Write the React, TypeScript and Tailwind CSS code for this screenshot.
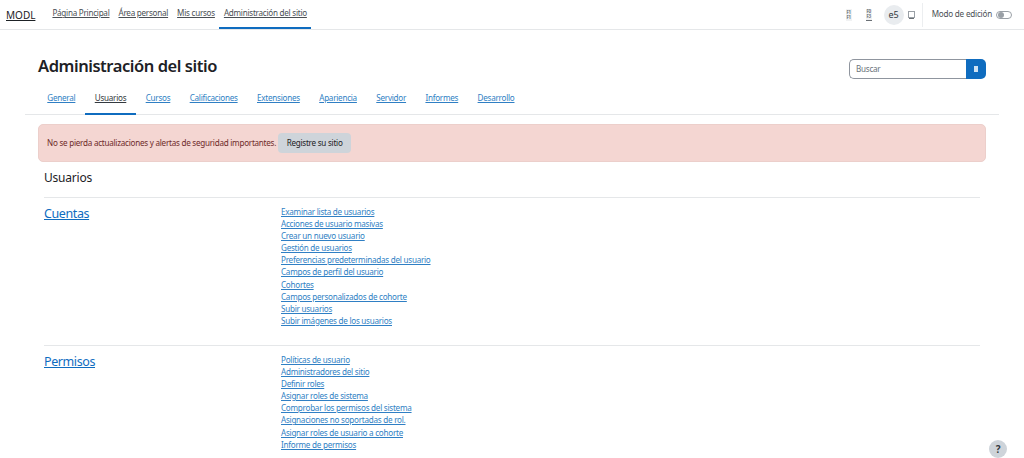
import { ReactNode } from "react"

const primaryNav = ["Página Principal", "Área personal", "Mis cursos", "Administración del sitio"]
const tabs = ["General", "Usuarios", "Cursos", "Calificaciones", "Extensiones", "Apariencia", "Servidor", "Informes", "Desarrollo"]

const sections = [
  {
    title: "Cuentas",
    links: [
      "Examinar lista de usuarios",
      "Acciones de usuario masivas",
      "Crear un nuevo usuario",
      "Gestión de usuarios",
      "Preferencias predeterminadas del usuario",
      "Campos de perfil del usuario",
      "Cohortes",
      "Campos personalizados de cohorte",
      "Subir usuarios",
      "Subir imágenes de los usuarios",
    ],
  },
  {
    title: "Permisos",
    links: [
      "Políticas de usuario",
      "Administradores del sitio",
      "Definir roles",
      "Asignar roles de sistema",
      "Comprobar los permisos del sistema",
      "Asignaciones no soportadas de rol.",
      "Asignar roles de usuario a cohorte",
      "Informe de permisos",
    ],
  },
]

function MissingGlyph({ underline, children }: { underline?: boolean; children: ReactNode }) {
  return (
    <span className={`flex h-[12px] w-[6px] flex-col items-center justify-center bg-[#f1f2f3] text-[4.5px] leading-[5px] font-semibold text-[#5c6267] ${underline ? "border-b border-[#6a7075]" : ""}`}>
      {children}
    </span>
  )
}

export default function App() {
  return (
    <div className="relative h-[458px] overflow-hidden bg-white font-['Noto_Sans',sans-serif] text-[8.1px] tracking-[-0.25px] text-[#1d2125]">
      <nav className="flex h-[30px] items-stretch border-b border-[#e5e7e9] pr-[12px] pl-[6px]">
        <a className="mr-[12.5px] self-center text-[10px] leading-none tracking-normal text-[#1d2125] underline">MODL</a>
        <ul className="flex items-stretch">
          {primaryNav.map((item, index) => (
            <li
              key={item}
              className={`flex items-center px-[4.5px] text-[#4a4f54] underline ${index === 3 ? "border-b-2 border-[#0f6cbf]" : "border-b-2 border-transparent"}`}
            >
              {item}
            </li>
          ))}
        </ul>
        <div className="ml-auto flex items-center">
          <MissingGlyph>
            <span>F1</span>
            <span>F1</span>
          </MissingGlyph>
          <span className="ml-[14px]">
            <MissingGlyph underline>
              <span>F0</span>
              <span>F3</span>
            </MissingGlyph>
          </span>
          <span className="ml-[12px] flex h-[20px] w-[20px] items-center justify-center rounded-full bg-[#e9ecef] text-[9px] tracking-normal text-[#343a40]">e5</span>
          <span className="ml-[4px] h-[7px] w-[7px] border border-[#9aa0a6] shadow-[0_2px_0_-1px_#6a7075]" />
          <span className="ml-[7px] h-[24px] border-l border-[#eceef0]" />
          <span className="ml-[9px] tracking-[-0.2px] text-[#4a4f54]">Modo de edición</span>
          <span className="ml-[4px] flex h-[8px] w-[16px] items-center rounded-full border border-[#9aa0a6] bg-white px-[1px]">
            <span className="h-[6px] w-[6px] rounded-full bg-[#9aa0a6]" />
          </span>
        </div>
      </nav>

      <main className="px-[38px]">
        <header className="flex items-start justify-between pt-[26px]">
          <h1 className="text-[16.5px] leading-[20px] font-semibold tracking-[-0.45px]">Administración del sitio</h1>
          <div className="mt-[3px] flex h-[20px] w-[137px]">
            <div className="flex flex-1 items-center rounded-l-[5px] border border-r-0 border-[#8f959e] pl-[6px] text-[#6a737b]">Buscar</div>
            <button className="flex w-[20px] items-center justify-center rounded-r-[5px] bg-[#0f6cbf]">
              <span className="h-[6px] w-[4px] bg-[#cfe2f3]" />
            </button>
          </div>
        </header>

        <div className="-mx-[13px] mt-[5px] flex h-[31px] border-b border-[#e5e7e9] pl-[12.6px]">
          {tabs.map((tab, index) => (
            <a
              key={tab}
              className={`-mb-px flex items-center px-[9.7px] underline ${index === 1 ? "border-b-2 border-[#0f6cbf] text-[#343a40]" : "border-b-2 border-transparent text-[#2f7fc4]"}`}
            >
              {tab}
            </a>
          ))}
        </div>

        <div className="mt-[9px] flex h-[38px] items-center rounded-[5px] border border-[#eccfcb] bg-[#f4d6d2] pl-[8px] text-[#6e2b2a]">
          No se pierda actualizaciones y alertas de seguridad importantes.
          <button className="ml-[2px] h-[20px] rounded-[4px] bg-[#ced4da] px-[8.5px] text-[#1d2125]">Registre su sitio</button>
        </div>

        <div className="px-[6px]">
          <h2 className="mt-[8px] text-[12px] leading-[16px] tracking-[-0.2px]">Usuarios</h2>

          {sections.map((section) => (
            <section key={section.title} className="mt-[11px] flex border-t border-[#e5e7e9] pt-[8px]">
              <h3 className="w-[237px] text-[12.5px] leading-[15px] tracking-[-0.4px] text-[#0f6cbf] underline">{section.title}</h3>
              <ul className="pb-[7px]">
                {section.links.map((link) => (
                  <li key={link} className="leading-[12.1px] text-[#2f7fc4] underline">
                    {link}
                  </li>
                ))}
              </ul>
            </section>
          ))}
        </div>
      </main>

      <button className="absolute top-[440px] left-[989px] flex h-[18px] w-[18px] items-center justify-center rounded-full bg-[#ced4da] text-[10px] font-bold text-[#343a40]">?</button>
    </div>
  )
}
